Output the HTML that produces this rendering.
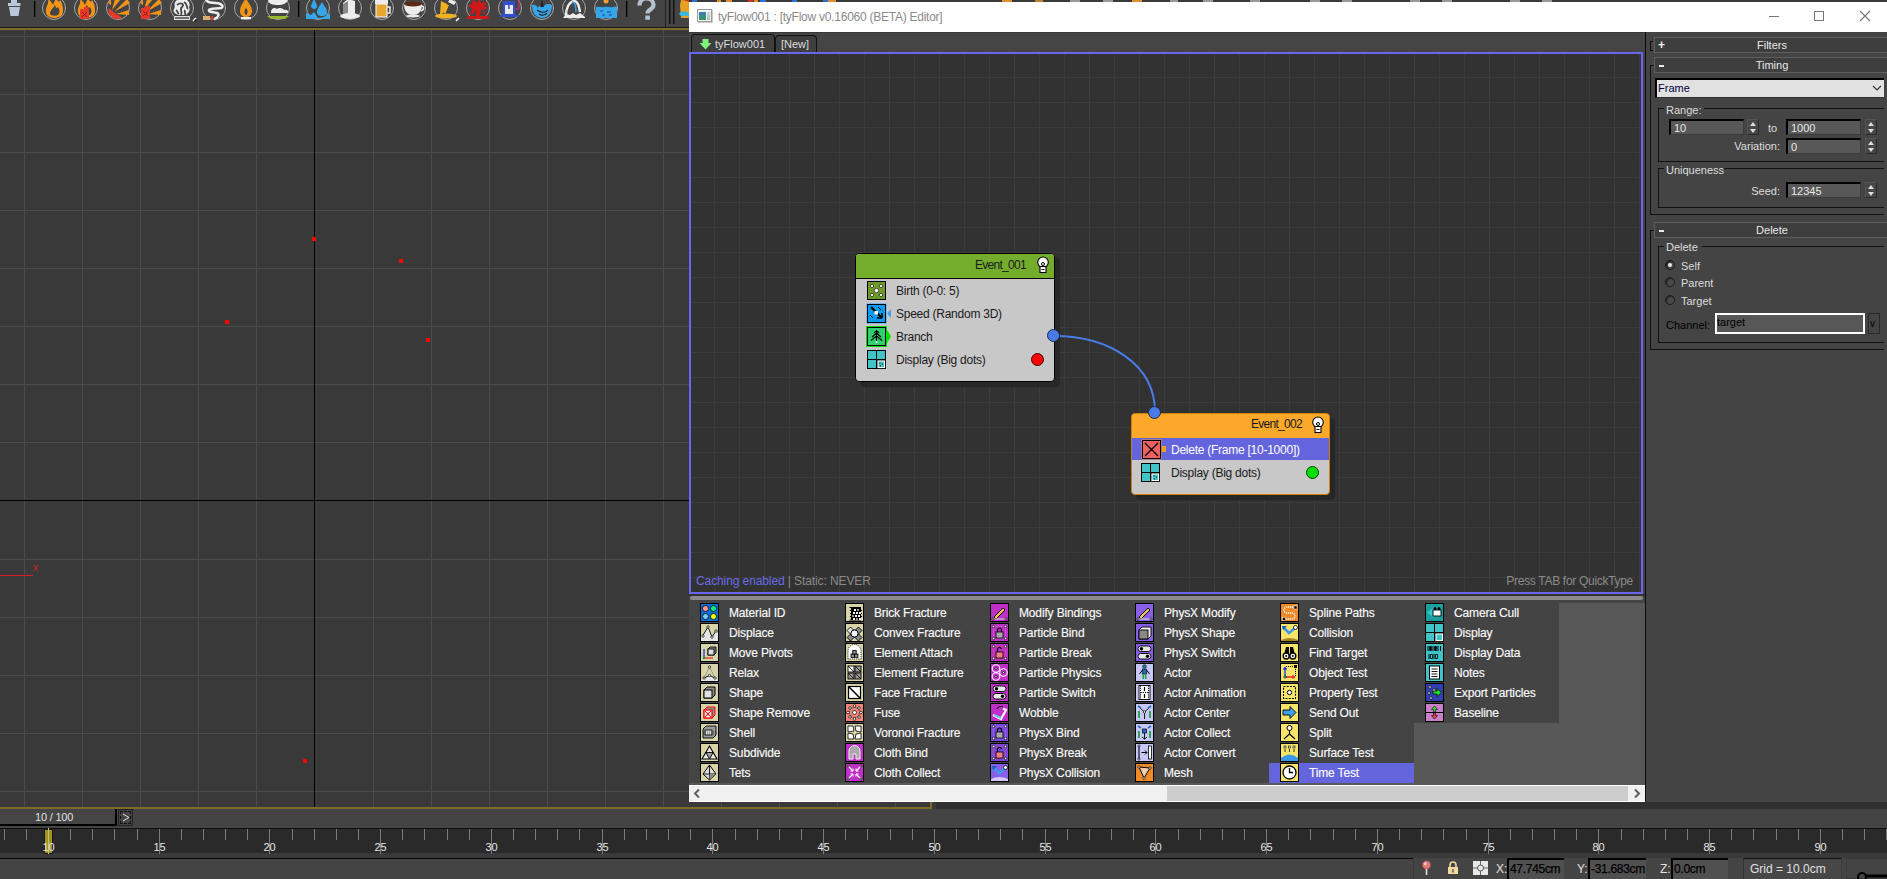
<!DOCTYPE html>
<html><head><meta charset="utf-8">
<style>
*{box-sizing:border-box;margin:0;padding:0}
html,body{width:1887px;height:879px;overflow:hidden;background:#444;font-family:"Liberation Sans",sans-serif;}
.a{position:absolute}
.t{position:absolute;white-space:nowrap;line-height:1}
#vp{left:0;top:28px;width:932px;height:781px;background-color:#393939;border:2px solid #7f6a2a;border-left:none;
 }
.rd{position:absolute;width:4px;height:4px;background:#f00}
#ed{left:689px;top:2px;width:1198px;height:800px;background:#444}
#title{left:0;top:0;width:1198px;height:30px;background:#fff;border-bottom:1px solid #000}
#graph{left:689px;top:52px;width:954px;height:542px;border:2px solid #6666ee;background-color:#323232;
 background-image:linear-gradient(to right,#3c3c3c 1px,transparent 1px),linear-gradient(to bottom,#3c3c3c 1px,transparent 1px);
 background-size:25px 25px;background-position:23px 23px;}
.lt{font-size:12px;color:#fafafa;letter-spacing:-0.15px;-webkit-text-stroke:0.15px #fafafa}
</style></head><body>

<div class="a" style="left:0;top:0;width:666px;height:27px;background:#444;border-right:1px solid #222"></div>
<div class="a" style="left:0;top:27px;width:932px;height:1px;background:#1a1a1a"></div>
<svg class="a" style="left:0;top:0" width="689" height="27"><path d="M11 0H17V3H20.5V6H8V3H11Z" fill="#b8c8d8"/><path d="M9 7H20L18.5 16H10.5Z" fill="#b8c8d8"/><rect x="34" y="1" width="1.3" height="16" fill="#000"/><rect x="298" y="1" width="1.3" height="16" fill="#000"/><rect x="626" y="1" width="1.3" height="16" fill="#000"/><circle cx="54" cy="8" r="11.5" fill="none" stroke="#a8a8a8" stroke-width="1"/><circle cx="86" cy="8" r="11.5" fill="none" stroke="#a8a8a8" stroke-width="1"/><circle cx="118" cy="8" r="11.5" fill="none" stroke="#a8a8a8" stroke-width="1"/><circle cx="150" cy="8" r="11.5" fill="none" stroke="#a8a8a8" stroke-width="1"/><circle cx="182" cy="8" r="11.5" fill="none" stroke="#a8a8a8" stroke-width="1"/><circle cx="214" cy="8" r="11.5" fill="none" stroke="#a8a8a8" stroke-width="1"/><circle cx="246" cy="8" r="11.5" fill="none" stroke="#a8a8a8" stroke-width="1"/><circle cx="278" cy="8" r="11.5" fill="none" stroke="#a8a8a8" stroke-width="1"/><circle cx="318" cy="8" r="11.5" fill="none" stroke="#a8a8a8" stroke-width="1"/><circle cx="350" cy="8" r="11.5" fill="none" stroke="#a8a8a8" stroke-width="1"/><circle cx="382" cy="8" r="11.5" fill="none" stroke="#a8a8a8" stroke-width="1"/><circle cx="414" cy="8" r="11.5" fill="none" stroke="#a8a8a8" stroke-width="1"/><circle cx="446" cy="8" r="11.5" fill="none" stroke="#a8a8a8" stroke-width="1"/><circle cx="478" cy="8" r="11.5" fill="none" stroke="#a8a8a8" stroke-width="1"/><circle cx="510" cy="8" r="11.5" fill="none" stroke="#a8a8a8" stroke-width="1"/><circle cx="542" cy="8" r="11.5" fill="none" stroke="#a8a8a8" stroke-width="1"/><circle cx="574" cy="8" r="11.5" fill="none" stroke="#a8a8a8" stroke-width="1"/><circle cx="606" cy="8" r="11.5" fill="none" stroke="#a8a8a8" stroke-width="1"/><path d="M46 9C47 5 49 3 48 -1C51 1 52 3 53 5C54 2 56 0 55 -2C58 1 59 3 60 0C63 4 63 8 63 11C63 16 59 18 54 18C49 18 45 15 46 9Z" fill="#f29418"/><path d="M50 14C50 10 53 9 55 5C56 8 57 9 58 7C60 10 60 13 58 15C56 16 51 16 50 14Z" fill="#444"/><path d="M78 9C79 5 81 3 80 -1C83 1 84 3 85 5C86 2 88 0 87 -2C90 1 91 3 92 0C95 4 95 8 95 11C95 16 91 18 86 18C81 18 77 15 78 9Z" fill="#f29418"/><path d="M82 14C82 10 85 9 87 5C88 8 89 9 90 7C92 10 92 13 90 15C88 16 83 16 82 14Z" fill="#444"/><rect x="80" y="9" width="9" height="10" rx="1" fill="#e53a2a"/><path d="M82 12L87 17M87 12L82 17" stroke="#a01818" stroke-width="1"/><rect x="84" y="7" width="5" height="2" fill="#e53a2a"/><path d="M112 10L115 -1H121Z M114 12L127 -1L130 3Z M116 14L129 10V15Z M108 3L111 -1V5Z" fill="#f29418"/><path d="M109 8A8.5 8.5 0 0 0 122 17.5L114 12.5Z" fill="#e53a2a"/><path d="M144 10L147 -1H153Z M146 12L159 -1L162 3Z M148 14L161 10V15Z M140 3L143 -1V5Z" fill="#f29418"/><rect x="141" y="8" width="9" height="11" rx="1" fill="#e53a2a"/><rect x="145" y="6" width="5" height="2" fill="#e53a2a"/><path d="M143 11L148 16M148 11L143 16" stroke="#a01818" stroke-width="1"/><circle cx="145.5" cy="13.5" r="1.2" fill="#e53a2a" stroke="#a01818" stroke-width=".8"/><path d="M176 1C173 4 176 6 174 9C172 12 176 14 178 15H186C188 13 191 10 189 7C191 4 188 1 187 0H177Z" fill="#ececec"/><path d="M177 5C181 2 185 4 182 7C179 9 183 11 181 15M184 2C188 4 186 7 188 9M176 10C178 11 177 13 179 14M185 10C184 12 186 13 185 15" stroke="#444" stroke-width="1.8" fill="none"/><rect x="174.5" y="16.5" width="15" height="3" fill="#707070" stroke="#e0e0e0" stroke-width="1"/><path d="M193 21L196 18" stroke="#fff" stroke-width="1.6"/><circle cx="195.5" cy="20.5" r="1" fill="#000"/><path d="M206 0C208 3 212 3 216 3C222 3 224 7 221 8C217 9 210 8 209 10C208 12 214 12 217 13C220 14 218 18 214 19" stroke="#ececec" stroke-width="2.6" fill="none"/><rect x="203" y="16" width="7" height="4" fill="#d8b070"/><rect x="211" y="16" width="2" height="4" fill="#e53a2a"/><path d="M246 -2C243 3 240 6 240 11C240 15 243 17 246 17C249 17 252 15 252 11C252 6 248 3 246 -2Z" fill="#f29418"/><path d="M246 8C244 10 244 14 246 15C248 14 248 10 246 8Z" fill="#444"/><rect x="241" y="17" width="10" height="2.2" fill="#eee"/><path d="M268 0H288C287 3 283 5 278 5C273 5 268 4 268 0Z" fill="#ececec"/><path d="M271 12C271 8 275 7 277 9C279 7 283 8 284 10C286 9 289 11 288 13H271Z" fill="#ececec"/><path d="M267 16H289L285 19H271Z" fill="#98b830"/><path d="M314 -1C312 3 311 5 311 6C311 8 313 9 314 9C316 9 317 8 317 6C317 5 316 3 314 -1Z" fill="#35a6ea"/><path d="M322 2C319 7 317 9 317 12C317 15 319 16 322 16C325 16 327 15 327 12C327 9 325 7 322 2Z" fill="#35a6ea"/><path d="M306 13L311 15L314 12L318 18L324 17L330 13V19H306Z" fill="#35a6ea"/><path d="M343 3L348 -1L355 1V15H343Z" fill="#ececec"/><path d="M343 4L348 1V15H343Z" fill="#8a8a8a"/><ellipse cx="350" cy="16" rx="10" ry="3" fill="#ececec"/><rect x="375" y="-1" width="13" height="5" fill="#ececec"/><rect x="376" y="4" width="11" height="13" fill="#e8a830" stroke="#ececec" stroke-width="1.2"/><path d="M387 7H390V13H387" stroke="#ececec" stroke-width="1.5" fill="none"/><path d="M404 4H422C422 12 418 15 413 15C408 15 404 12 404 4Z" fill="#ececec"/><ellipse cx="413" cy="4" rx="9" ry="2.5" fill="#5a2a14"/><path d="M421 6C424 6 425 9 421 11" stroke="#ececec" stroke-width="1.5" fill="none"/><ellipse cx="413" cy="16" rx="7" ry="1.5" fill="#ececec"/><path d="M450 -1L456 2L454 5L448 2Z" fill="#ececec"/><path d="M441 1L447 4L442 14H446L440 14Z" fill="#f0b020"/><path d="M442 4L447 6L444 13" stroke="#f0b020" stroke-width="3" fill="none"/><ellipse cx="446" cy="16" rx="11" ry="2.5" fill="#f0b020"/><path d="M456 21L459 18" stroke="#fff" stroke-width="1.6"/><path d="M473 -1L477 3L480 -1L481 3L488 2L484 6L489 8L483 10L481 9L480 16H476L476 10L471 13L472 8L467 6L472 4Z" fill="#d01818"/><path d="M475 12L469 14M482 12L487 15" stroke="#d01818" stroke-width="1.4"/><rect x="467" y="16" width="22" height="3" rx="1.5" fill="#d01818"/><rect x="503" y="1" width="12" height="15" fill="#3050d0"/><rect x="505" y="5" width="8" height="9" fill="#e8e8e8"/><path d="M509 5V9" stroke="#3050d0" stroke-width="1.5"/><path d="M513 -1H519V9H515" stroke="#d02890" stroke-width="1" fill="none"/><rect x="500" y="15" width="19" height="2" fill="#3050d0"/><path d="M532 5C534 4 537 5 538 8C539 5 542 4 544 6C546 3 550 4 552 5C552 13 548 18 542 18C536 18 532 13 532 5Z" fill="#35a6ea"/><path d="M537 10C540 13 546 13 548 10M539 14C542 16 546 15 547 13" stroke="#222" stroke-width="1.2" fill="none"/><path d="M542 0L544 7H540Z" fill="#222"/><path d="M566 16C566 8 569 2 574 1C577 1 579 5 580 12" stroke="#ececec" stroke-width="2.5" fill="none"/><path d="M572 2C575 2 576 6 576 12" stroke="#35a6ea" stroke-width="1.5" fill="none"/><path d="M563 18L566 14L570 15L573 13L576 15L580 13L585 17V18Z" fill="#ececec"/><circle cx="606" cy="1" r="2.5" fill="#f0a030"/><path d="M596 7C599 6 601 8 604 7C607 6 610 8 613 7C615 6 616 7 617 7V18H596Z" fill="#35a6ea"/><path d="M600 11H603M607 12H611M602 15H605M609 15H612" stroke="#1a4a8a" stroke-width="1.2"/><path d="M639.5 5.5C639.5 1 642.5 -1.5 646 -1.5C650 -1.5 653.5 1 653.5 5C653.5 9.5 647.5 9.5 647.5 13.5" stroke="#b4c0cc" stroke-width="4.2" fill="none"/><rect x="645.3" y="15.5" width="4.6" height="4.3" fill="#b4c0cc"/><rect x="665" y="0" width="1" height="27" fill="#222"/><rect x="669" y="0" width="1.5" height="24" fill="#111"/><rect x="673" y="0" width="1.5" height="24" fill="#111"/><path d="M681 0H689V18H681L680 5Z" fill="#e8a020"/><path d="M683 0L689 2V0Z" fill="#d03020"/><path d="M679 14C681 11 685 11 689 13V17C686 15 683 15 682 17Z" fill="#30b8e8"/></svg>
<div id="vp" class="a"></div>
<div class="a" style="left:24px;top:30px;width:1px;height:777px;background:#4c4c4c"></div><div class="a" style="left:82px;top:30px;width:1px;height:777px;background:#4c4c4c"></div><div class="a" style="left:140px;top:30px;width:1px;height:777px;background:#4c4c4c"></div><div class="a" style="left:198px;top:30px;width:1px;height:777px;background:#4c4c4c"></div><div class="a" style="left:256px;top:30px;width:1px;height:777px;background:#4c4c4c"></div><div class="a" style="left:373px;top:30px;width:1px;height:777px;background:#4c4c4c"></div><div class="a" style="left:431px;top:30px;width:1px;height:777px;background:#4c4c4c"></div><div class="a" style="left:489px;top:30px;width:1px;height:777px;background:#4c4c4c"></div><div class="a" style="left:547px;top:30px;width:1px;height:777px;background:#4c4c4c"></div><div class="a" style="left:605px;top:30px;width:1px;height:777px;background:#4c4c4c"></div><div class="a" style="left:663px;top:30px;width:1px;height:777px;background:#4c4c4c"></div><div class="a" style="left:721px;top:30px;width:1px;height:777px;background:#4c4c4c"></div><div class="a" style="left:779px;top:30px;width:1px;height:777px;background:#4c4c4c"></div><div class="a" style="left:837px;top:30px;width:1px;height:777px;background:#4c4c4c"></div><div class="a" style="left:895px;top:30px;width:1px;height:777px;background:#4c4c4c"></div><div class="a" style="left:0;top:36px;width:930px;height:1px;background:#4c4c4c"></div><div class="a" style="left:0;top:94px;width:930px;height:1px;background:#4c4c4c"></div><div class="a" style="left:0;top:152px;width:930px;height:1px;background:#4c4c4c"></div><div class="a" style="left:0;top:210px;width:930px;height:1px;background:#4c4c4c"></div><div class="a" style="left:0;top:268px;width:930px;height:1px;background:#4c4c4c"></div><div class="a" style="left:0;top:326px;width:930px;height:1px;background:#4c4c4c"></div><div class="a" style="left:0;top:384px;width:930px;height:1px;background:#4c4c4c"></div><div class="a" style="left:0;top:442px;width:930px;height:1px;background:#4c4c4c"></div><div class="a" style="left:0;top:559px;width:930px;height:1px;background:#4c4c4c"></div><div class="a" style="left:0;top:617px;width:930px;height:1px;background:#4c4c4c"></div><div class="a" style="left:0;top:675px;width:930px;height:1px;background:#4c4c4c"></div><div class="a" style="left:0;top:733px;width:930px;height:1px;background:#4c4c4c"></div><div class="a" style="left:0;top:791px;width:930px;height:1px;background:#4c4c4c"></div>
<div class="a" style="left:314px;top:30px;width:1px;height:777px;background:#000"></div>
<div class="a" style="left:0;top:500px;width:930px;height:1px;background:#000"></div>
<div class="rd" style="left:312px;top:237px"></div>
<div class="rd" style="left:399px;top:259px"></div>
<div class="rd" style="left:225px;top:320px"></div>
<div class="rd" style="left:426px;top:338px"></div>
<div class="rd" style="left:303px;top:759px"></div>
<div class="a" style="left:0;top:575px;width:33px;height:1px;background:#d02020"></div>
<div class="t" style="left:33px;top:563px;font-size:10px;color:#d02020">x</div>
<div class="a" id="ed"></div>
<div class="a" style="left:689px;top:0;width:1198px;height:2px;background:#3a3a3a"></div><div class="a" style="left:692px;top:0;width:5px;height:2px;background:#2a70d0"></div><div class="a" style="left:717px;top:0;width:4px;height:2px;background:#e09030"></div><div class="a" style="left:726px;top:0;width:6px;height:2px;background:#e09030"></div><div class="a" style="left:748px;top:0;width:5px;height:2px;background:#d03030"></div><div class="a" style="left:754px;top:0;width:4px;height:2px;background:#e09030"></div><div class="a" style="left:760px;top:0;width:6px;height:2px;background:#2a70d0"></div><div class="a" style="left:792px;top:0;width:5px;height:2px;background:#2a70d0"></div><div class="a" style="left:823px;top:0;width:5px;height:2px;background:#2a70d0"></div><div class="a" style="left:828px;top:0;width:8px;height:2px;background:#e09030"></div><div class="a" style="left:1002px;top:0;width:10px;height:2px;background:#e09030"></div><div class="a" style="left:1035px;top:0;width:8px;height:2px;background:#c08030"></div><div class="a" style="left:1070px;top:0;width:10px;height:2px;background:#999"></div><div class="a" style="left:1103px;top:0;width:10px;height:2px;background:#999"></div><div class="a" style="left:1132px;top:0;width:10px;height:2px;background:#e09030"></div><div class="a" style="left:1170px;top:0;width:8px;height:2px;background:#999"></div><div class="a" style="left:1203px;top:0;width:10px;height:2px;background:#999"></div><div class="a" style="left:1250px;top:0;width:10px;height:2px;background:#999"></div><div class="a" style="left:1310px;top:0;width:10px;height:2px;background:#999"></div><div class="a" style="left:1342px;top:0;width:10px;height:2px;background:#999"></div><div class="a" style="left:1410px;top:0;width:10px;height:2px;background:#999"></div><div class="a" style="left:1442px;top:0;width:10px;height:2px;background:#999"></div><div class="a" style="left:1510px;top:0;width:10px;height:2px;background:#999"></div><div class="a" style="left:1542px;top:0;width:10px;height:2px;background:#999"></div>
<div class="a" style="left:689px;top:2px;width:1198px;height:30px;background:#fff"></div>
<div class="a" style="left:689px;top:32px;width:1198px;height:1px;background:#383838"></div>
<!-- title icon -->
<div class="a" style="left:697px;top:9px;width:15px;height:13px;border:1px solid #9a9a9a;background:#f4f4f4;box-shadow:1px 1px 0 #ccc"></div>
<div class="a" style="left:699px;top:12px;width:7px;height:8px;background:linear-gradient(#3b78b8,#3a9a5a)"></div>
<div class="a" style="left:707px;top:12px;width:3px;height:8px;background:linear-gradient(#d0d8e0,#a8c8a0)"></div>
<div class="t" style="left:718px;top:11px;font-size:12px;color:#8a8a8a;letter-spacing:-0.25px">tyFlow001 : [tyFlow v0.16060 (BETA) Editor]</div>
<!-- window buttons -->
<div class="a" style="left:1769px;top:16px;width:10px;height:1px;background:#777"></div>
<div class="a" style="left:1814px;top:11px;width:10px;height:10px;border:1px solid #777"></div>
<svg class="a" style="left:1859px;top:10px" width="12" height="12"><path d="M1 1L11 11M11 1L1 11" stroke="#777" stroke-width="1.1"/></svg>
<!-- tab bar -->
<div class="a" style="left:689px;top:33px;width:956px;height:19px;background:#454545"></div>
<div class="a" style="left:691px;top:34px;width:84px;height:19px;border:1px solid #111;border-bottom:none;border-radius:4px 4px 0 0;background:#3e3e3e"></div>
<div class="a" style="left:775px;top:35px;width:42px;height:18px;border:1px solid #111;border-bottom:none;border-radius:4px 4px 0 0;background:#3e3e3e"></div>
<svg class="a" style="left:699px;top:39px" width="13" height="11"><path d="M3.5 0H9.5V4H12.5L6.5 10.5L0.5 4H3.5Z" fill="#7ef07e"/></svg>
<div class="t" style="left:715px;top:39px;font-size:11px;color:#dcdcdc">tyFlow001</div>
<div class="t" style="left:781px;top:39px;font-size:11px;color:#dcdcdc">[New]</div>

<div class="a" id="graph"></div>
<style>
.nd{position:absolute;border:1px solid #000;border-radius:4px;background:#c8c8c8;box-shadow:5px 5px 0 #272727}
.nh{position:absolute;left:0;top:0;right:0;height:25px;border-bottom:1px solid #000;border-radius:3px 3px 0 0}
.nt{position:absolute;font-size:12px;color:#1a1a1a;line-height:1;white-space:nowrap;letter-spacing:-0.25px}
.port{position:absolute;width:13px;height:13px;border-radius:50%;background:#4a7ce8;border:1px solid #1c2a50}
</style>
<!-- wire -->
<svg class="a" style="left:1040px;top:320px" width="140" height="110"><path d="M14 16C70 16 115 45 115 92" stroke="#4a7ce8" stroke-width="2" fill="none"/></svg>
<!-- Event_001 -->
<div class="nd" style="left:855px;top:253px;width:200px;height:129px">
 <div class="nh" style="background:#74ad2c"></div>
</div>
<div class="nt" style="left:900px;width:126px;text-align:right;top:259px;letter-spacing:-0.7px">Event_001</div>
<svg class="a" style="left:1036px;top:256px" width="14" height="18"><circle cx="7" cy="6.3" r="5.3" fill="#fff" stroke="#000" stroke-width="1.1"/><rect x="4" y="10.5" width="6" height="6" fill="#fff" stroke="#000" stroke-width="1.1"/><circle cx="7" cy="8" r="1.5" fill="#fff" stroke="#000" stroke-width="1"/><path d="M5.5 13.5H8.5" stroke="#000" stroke-width="1"/></svg>
<!-- Birth icon -->
<svg class="a" style="left:867px;top:281px" width="19" height="19"><rect x="0.5" y="0.5" width="18" height="18" fill="#6e9a2a" stroke="#000"/><circle cx="5" cy="5" r="1.6" fill="#fff" stroke="#000" stroke-width=".6"/><circle cx="14" cy="5" r="1.6" fill="#fff" stroke="#000" stroke-width=".6"/><circle cx="5" cy="14" r="1.6" fill="#fff" stroke="#000" stroke-width=".6"/><circle cx="14" cy="14" r="1.6" fill="#fff" stroke="#000" stroke-width=".6"/><circle cx="9.5" cy="9.5" r="2.2" fill="#fff" stroke="#000" stroke-width=".6"/></svg>
<div class="nt" style="left:896px;top:285px">Birth (0-0: 5)</div>
<!-- Speed icon -->
<svg class="a" style="left:866px;top:303px" width="26" height="21"><rect x="0.5" y="0.5" width="20" height="20" fill="#3aa8ff"/><rect x="1.5" y="1.5" width="18" height="18" fill="#0a9af0" stroke="#000"/><path d="M5 4L16 15" stroke="#000" stroke-width="2.2"/><path d="M16 15L11 15M16 15L16 10" stroke="#000" stroke-width="1.6"/><path d="M12 4L15 7M4 12L7 15" stroke="#000" stroke-width="1"/><rect x="8.5" y="8" width="3.5" height="3.5" fill="#fff"/><path d="M21 10.5L25 6V15Z" fill="#4aa0e8"/></svg>
<div class="nt" style="left:896px;top:308px">Speed (Random 3D)</div>
<!-- Branch icon -->
<svg class="a" style="left:866px;top:326px" width="26" height="21"><rect x="0" y="0" width="21" height="21" fill="#00e000"/><rect x="1.5" y="1.5" width="18" height="18" fill="#30d070" stroke="#000"/><path d="M10.5 4V16M10.5 7L6 11M10.5 7L15 11M10.5 10L5 14.5M10.5 10L16 14.5M10.5 4.5L8 7M10.5 4.5L13 7" stroke="#000" stroke-width="1.1" fill="none"/><circle cx="10.5" cy="16" r="1" fill="#fff"/><path d="M21 4L25 10.5L21 17Z" fill="#00e000"/></svg>
<div class="nt" style="left:896px;top:331px">Branch</div>
<!-- Display icon -->
<svg class="a" style="left:867px;top:350px" width="19" height="19"><rect x="0.5" y="0.5" width="18" height="18" fill="#40c4c8" stroke="#000"/><path d="M9.5 0V19M0 9.5H19" stroke="#000" stroke-width="1"/><rect x="10" y="10" width="8.5" height="8.5" fill="#fff" stroke="#000" stroke-width=".8"/><rect x="11.5" y="11.5" width="5.5" height="5.5" fill="#40c4c8"/><circle cx="13" cy="13" r=".6" fill="#000"/><circle cx="15.5" cy="14" r=".6" fill="#000"/><circle cx="13.5" cy="15.8" r=".6" fill="#000"/></svg>
<div class="nt" style="left:896px;top:354px">Display (Big dots)</div>
<div class="a" style="left:1031px;top:353px;width:13px;height:13px;border-radius:50%;background:#f00;border:1px solid #400"></div>
<div class="port" style="left:1047px;top:329px"></div>

<!-- Event_002 -->
<div class="nd" style="left:1131px;top:413px;width:199px;height:82px;border-color:#d08000">
 <div class="nh" style="background:#fca82a;border-bottom-color:#d08000"></div>
</div>
<div class="a" style="left:1132px;top:438px;width:197px;height:22px;background:#6464dc"></div>
<div class="nt" style="left:1176px;width:126px;text-align:right;top:418px;letter-spacing:-0.7px">Event_002</div>
<svg class="a" style="left:1311px;top:416px" width="14" height="18"><circle cx="7" cy="6.3" r="5.3" fill="#fff" stroke="#000" stroke-width="1.1"/><rect x="4" y="10.5" width="6" height="6" fill="#fff" stroke="#000" stroke-width="1.1"/><circle cx="7" cy="8" r="1.5" fill="#fff" stroke="#000" stroke-width="1"/><path d="M5.5 13.5H8.5" stroke="#000" stroke-width="1"/></svg>
<svg class="a" style="left:1141px;top:439px" width="27" height="21"><rect x="0.5" y="0.5" width="20" height="20" fill="#f09030"/><rect x="1.5" y="1.5" width="18" height="18" fill="#f06060" stroke="#000"/><path d="M4 4L17 17M17 4L4 17" stroke="#000" stroke-width="1.4"/><rect x="21" y="7" width="4" height="6" fill="#f0a020"/></svg>
<div class="nt" style="left:1171px;top:444px;color:#fff">Delete (Frame [10-1000])</div>
<svg class="a" style="left:1141px;top:463px" width="19" height="19"><rect x="0.5" y="0.5" width="18" height="18" fill="#40c4c8" stroke="#000"/><path d="M9.5 0V19M0 9.5H19" stroke="#000" stroke-width="1"/><rect x="10" y="10" width="8.5" height="8.5" fill="#fff" stroke="#000" stroke-width=".8"/><rect x="11.5" y="11.5" width="5.5" height="5.5" fill="#40c4c8"/><circle cx="13" cy="13" r=".6" fill="#000"/><circle cx="15.5" cy="14" r=".6" fill="#000"/><circle cx="13.5" cy="15.8" r=".6" fill="#000"/></svg>
<div class="nt" style="left:1171px;top:467px">Display (Big dots)</div>
<div class="a" style="left:1306px;top:466px;width:13px;height:13px;border-radius:50%;background:#00e000;border:1px solid #040"></div>
<div class="port" style="left:1148px;top:406px"></div>

<div class="t" style="left:696px;top:575px;font-size:12px;color:#6a6ae8;letter-spacing:-0.1px">Caching enabled <span style="color:#8a8a8a">| Static: NEVER</span></div>
<div class="t" style="left:1400px;top:575px;width:233px;text-align:right;font-size:12px;color:#8a8a8a;letter-spacing:-0.3px">Press TAB for QuickType</div>

<style>
.hdr{position:absolute;left:1654px;width:233px;height:16px;border:1px solid #5e5e5e;border-right:none;background:#3e3e3e}
.hdr .c{position:absolute;left:2px;right:0;top:2px;text-align:center;font-size:11px;color:#e8e8e8;line-height:1}
.hdr .s{position:absolute;left:3px;top:1px;font-size:12px;color:#eee;font-weight:bold;line-height:1}
.fld{position:absolute;height:16px;background:#585858;border-top:2px solid #000;border-left:2px solid #000;border-right:1px solid #3c3c3c;border-bottom:1px solid #3c3c3c}
.fld span{position:absolute;left:3px;top:2px;font-size:11px;color:#e8e8e8;line-height:1}
.spn{position:absolute;width:12px;height:16px;background:#474747;border:1px solid #2a2a2a;border-top-color:#555;border-left-color:#555}
.spn:before{content:"";position:absolute;left:2px;top:2px;border-left:3.5px solid transparent;border-right:3.5px solid transparent;border-bottom:4px solid #ddd}
.spn:after{content:"";position:absolute;left:2px;top:9px;border-left:3.5px solid transparent;border-right:3.5px solid transparent;border-top:4px solid #ddd}
.lbl{position:absolute;font-size:11px;color:#ddd;line-height:1;white-space:nowrap}
.gb{position:absolute;border:1px solid #111;border-right:none}
.rad{position:absolute;width:10px;height:10px;border-radius:50%;background:#4a4a4a;border:1px solid #1a1a1a;box-shadow:inset 1px 1px 1px #222}
</style>
<div class="a" style="left:1645px;top:32px;width:1px;height:770px;background:#0a0a0a"></div>
<div class="a" style="left:1646px;top:32px;width:241px;height:770px;background:#444"></div>
<div class="a" style="left:1646px;top:802px;width:241px;height:1px;background:#555"></div>
<!-- Filters -->
<div class="a" style="left:1650px;top:41px;width:3px;height:10px;border:1px solid #111;border-right:none"></div>
<div class="hdr" style="top:37px"><div class="s">+</div><div class="c">Filters</div></div>
<!-- Timing -->
<div class="a" style="left:1650px;top:65px;width:4px;height:150px;border-left:1px solid #111;border-top:1px solid #111;border-bottom:1px solid #111"></div>
<div class="a" style="left:1650px;top:214px;width:234px;height:1px;background:#111"></div>
<div class="hdr" style="top:57px"><div class="a" style="left:4px;top:7px;width:5px;height:2px;background:#e8e8e8"></div><div class="c">Timing</div></div>
<div class="a" style="left:1655px;top:78px;width:229px;height:20px;background:#e1e1e1;border-top:2px solid #000;border-left:2px solid #000;border-bottom:1px solid #333"></div>
<div class="t" style="left:1658px;top:83px;font-size:11px;color:#000040">Frame</div>
<svg class="a" style="left:1872px;top:85px" width="10" height="7"><path d="M1 1L5 5L9 1" stroke="#333" stroke-width="1.2" fill="none"/></svg>
<!-- Range group -->
<div class="gb" style="left:1658px;top:108px;width:226px;height:54px"></div>
<div class="a" style="left:1664px;top:105px;width:40px;height:6px;background:#444"></div>
<div class="lbl" style="left:1666px;top:105px">Range:</div>
<div class="fld" style="left:1669px;top:119px;width:75px"><span>10</span></div>
<div class="spn" style="left:1747px;top:119px"></div>
<div class="lbl" style="left:1768px;top:123px">to</div>
<div class="fld" style="left:1786px;top:119px;width:75px"><span>1000</span></div>
<div class="spn" style="left:1865px;top:119px"></div>
<div class="lbl" style="left:1734px;top:141px;width:46px;text-align:right">Variation:</div>
<div class="fld" style="left:1786px;top:138px;width:75px"><span>0</span></div>
<div class="spn" style="left:1865px;top:138px"></div>
<!-- Uniqueness -->
<div class="gb" style="left:1658px;top:168px;width:226px;height:40px"></div>
<div class="a" style="left:1664px;top:164px;width:60px;height:6px;background:#444"></div>
<div class="lbl" style="left:1666px;top:165px">Uniqueness</div>
<div class="lbl" style="left:1740px;top:186px;width:40px;text-align:right">Seed:</div>
<div class="fld" style="left:1786px;top:182px;width:75px"><span>12345</span></div>
<div class="spn" style="left:1865px;top:182px"></div>
<!-- Delete -->
<div class="a" style="left:1650px;top:230px;width:4px;height:120px;border-left:1px solid #111;border-top:1px solid #111;border-bottom:1px solid #111"></div>
<div class="a" style="left:1650px;top:349px;width:234px;height:1px;background:#111"></div>
<div class="hdr" style="top:222px"><div class="a" style="left:4px;top:7px;width:5px;height:2px;background:#e8e8e8"></div><div class="c">Delete</div></div>
<div class="gb" style="left:1658px;top:246px;width:226px;height:97px"></div>
<div class="a" style="left:1664px;top:243px;width:38px;height:6px;background:#444"></div>
<div class="lbl" style="left:1666px;top:242px">Delete</div>
<div class="rad" style="left:1665px;top:260px"></div>
<div class="a" style="left:1668px;top:263px;width:4px;height:4px;border-radius:50%;background:#e8e8e8"></div>
<div class="rad" style="left:1665px;top:277px"></div>
<div class="rad" style="left:1665px;top:295px"></div>
<div class="lbl" style="left:1681px;top:261px">Self</div>
<div class="lbl" style="left:1681px;top:278px">Parent</div>
<div class="lbl" style="left:1681px;top:296px">Target</div>
<div class="lbl" style="left:1666px;top:320px;color:#000">Channel:</div>
<div class="a" style="left:1715px;top:313px;width:150px;height:21px;border:2px solid #fff;background:#575757"></div>
<div class="lbl" style="left:1717px;top:317px;color:#000">target</div>
<div class="a" style="left:1868px;top:313px;width:12px;height:21px;border:1px solid #2a2a2a;background:#444"></div>
<div class="lbl" style="left:1870px;top:319px;color:#000;font-size:10px">v</div>

<div class="a" style="left:689px;top:594px;width:956px;height:191px;background:#585858"></div>
<div class="a" style="left:689px;top:594px;width:956px;height:9px;background:#444"></div>
<div class="a" style="left:689px;top:594px;width:956px;height:2px;background:#333"></div>
<div class="a" style="left:690px;top:596px;width:953px;height:4px;border-radius:2px;background:#8a8a8a"></div>
<div class="a" style="left:689px;top:603px;width:725px;height:180px;background:#444"></div>
<div class="a" style="left:1414px;top:603px;width:145px;height:120px;background:#444"></div>
<div class="a" style="left:1269px;top:763px;width:145px;height:20px;background:#6464dc"></div>
<svg class="a" style="left:700px;top:603px" width="19" height="19"><rect x="0.5" y="0.5" width="18" height="18" fill="#0a6ed8" stroke="#000"/><circle cx="5.5" cy="5.5" r="3" fill="#ff9898" stroke="#000" stroke-width=".8"/><circle cx="13.5" cy="5.5" r="3" fill="#00f090" stroke="#000" stroke-width=".8"/><circle cx="5.5" cy="13.5" r="3" fill="#70d0ff" stroke="#000" stroke-width=".8"/><circle cx="13.5" cy="13.5" r="3" fill="#ffff00" stroke="#000" stroke-width=".8"/></svg>
<div class="t lt" style="left:729px;top:607px">Material ID</div>
<svg class="a" style="left:700px;top:623px" width="19" height="19"><rect x="0.5" y="0.5" width="18" height="18" fill="#d8d4a8" stroke="#000"/><path d="M1 18V13L3 13L8 4L12 14L16 8L18 11V18Z" fill="#e6e6e6"/><path d="M2.5 13L8 4L12 14L16 8" fill="none" stroke="#000" stroke-width=".9"/><circle cx="3" cy="13" r="1.2" fill="#fff" stroke="#000" stroke-width=".7"/><circle cx="8" cy="4" r="1.2" fill="#fff" stroke="#000" stroke-width=".7"/><circle cx="12" cy="14" r="1.2" fill="#fff" stroke="#000" stroke-width=".7"/><circle cx="16" cy="8" r="1.2" fill="#fff" stroke="#000" stroke-width=".7"/></svg>
<div class="t lt" style="left:729px;top:627px">Displace</div>
<svg class="a" style="left:700px;top:643px" width="19" height="19"><rect x="0.5" y="0.5" width="18" height="18" fill="#d8d4a8" stroke="#000"/><path d="M8 6L10 4H16V10L14 12H8Z" fill="#888" stroke="#000" stroke-width=".9"/><rect x="8" y="6" width="6" height="6" fill="#ddd" stroke="#000" stroke-width=".9"/><path d="M4 15V6" stroke="#1030f0" stroke-width="1.2"/><path d="M4 15H13" stroke="#f02020" stroke-width="1.2"/><circle cx="4" cy="15" r="1.2" fill="#10a030"/></svg>
<div class="t lt" style="left:729px;top:647px">Move Pivots</div>
<svg class="a" style="left:700px;top:663px" width="19" height="19"><rect x="0.5" y="0.5" width="18" height="18" fill="#d8d4a8" stroke="#000"/><path d="M1 18L4 15L9.5 12.5L15 15L18 18Z" fill="#e6e6e6"/><path d="M9.5 4L4 15M9.5 4L15 15" stroke="#888" stroke-width=".8"/><path d="M4 15L9.5 12.5L15 15" stroke="#000" stroke-width=".9" fill="none"/><circle cx="9.5" cy="4" r="1.2" fill="#fff" stroke="#000" stroke-width=".7"/><circle cx="4" cy="15" r="1.2" fill="#fff" stroke="#000" stroke-width=".7"/><circle cx="9.5" cy="12.5" r="1.2" fill="#fff" stroke="#000" stroke-width=".7"/><circle cx="15" cy="15" r="1.2" fill="#fff" stroke="#000" stroke-width=".7"/></svg>
<div class="t lt" style="left:729px;top:667px">Relax</div>
<svg class="a" style="left:700px;top:683px" width="19" height="19"><rect x="0.5" y="0.5" width="18" height="18" fill="#d8d4a8" stroke="#000"/><path d="M4 7L7 4H15V12L12 15H4Z" fill="#8a8a8a" stroke="#000" stroke-width="1"/><rect x="4" y="7" width="8" height="8" fill="#e0e0e0" stroke="#000" stroke-width="1"/></svg>
<div class="t lt" style="left:729px;top:687px">Shape</div>
<svg class="a" style="left:700px;top:703px" width="19" height="19"><rect x="0.5" y="0.5" width="18" height="18" fill="#d8d4a8" stroke="#000"/><path d="M4 7L7 4H15V12L12 15H4Z" fill="#8a8a8a" stroke="#f00" stroke-width="1"/><rect x="4" y="7" width="8" height="8" fill="#e0e0e0" stroke="#f00" stroke-width="1.2"/><path d="M5 8L11 14M11 8L5 14" stroke="#f00" stroke-width="1"/></svg>
<div class="t lt" style="left:729px;top:707px">Shape Remove</div>
<svg class="a" style="left:700px;top:723px" width="19" height="19"><rect x="0.5" y="0.5" width="18" height="18" fill="#d8d4a8" stroke="#000"/><path d="M3 6L6 3H16V12L13 15H3Z" fill="#999" stroke="#000" stroke-width=".9"/><rect x="5" y="7" width="7" height="5" fill="#ddd" stroke="#000" stroke-width=".8"/><path d="M3 9H16M3 11H16" stroke="#000" stroke-dasharray="1 1" stroke-width=".6"/></svg>
<div class="t lt" style="left:729px;top:727px">Shell</div>
<svg class="a" style="left:700px;top:743px" width="19" height="19"><rect x="0.5" y="0.5" width="18" height="18" fill="#d8d4a8" stroke="#000"/><path d="M9.5 3L17 16H2Z" fill="#e8e8e8" stroke="#000" stroke-width="1.1"/><path d="M5.8 9.5H13.2L9.5 16Z" fill="#999" stroke="#000" stroke-width=".9"/></svg>
<div class="t lt" style="left:729px;top:747px">Subdivide</div>
<svg class="a" style="left:700px;top:763px" width="19" height="19"><rect x="0.5" y="0.5" width="18" height="18" fill="#d8d4a8" stroke="#000"/><path d="M9.5 2L16 11L9.5 17L3 11Z" fill="#ddd" stroke="#000" stroke-width="1"/><path d="M9.5 2V17M3 11H16" stroke="#000" stroke-width=".9"/><path d="M9.5 11L16 11L9.5 17Z" fill="#888"/></svg>
<div class="t lt" style="left:729px;top:767px">Tets</div>
<svg class="a" style="left:845px;top:603px" width="19" height="19"><rect x="0.5" y="0.5" width="18" height="18" fill="#d8d4a8" stroke="#000"/><path d="M4.5 4.5H16M4.5 17H16" stroke="#000" stroke-width="1"/><rect x="6" y="5" width="10" height="12" fill="#000"/><path d="M5 7.5H17M5 10.5H17M5 13.5H17" stroke="#000" stroke-width="1"/><rect x="9" y="6" width="2" height="2" fill="#fff"/><rect x="12" y="6" width="2" height="2" fill="#999"/><rect x="8" y="9" width="2" height="2" fill="#fff"/><rect x="11" y="9" width="2" height="2" fill="#fff"/><rect x="14" y="9" width="2" height="2" fill="#fff"/><rect x="7" y="12" width="2" height="2" fill="#999"/><rect x="10" y="12" width="2" height="2" fill="#fff"/><rect x="13" y="12" width="2" height="2" fill="#fff"/><rect x="8" y="15" width="2" height="2" fill="#fff"/><rect x="11" y="15" width="2" height="2" fill="#999"/><rect x="14" y="15" width="2" height="2" fill="#fff"/></svg>
<div class="t lt" style="left:874px;top:607px">Brick Fracture</div>
<svg class="a" style="left:845px;top:623px" width="19" height="19"><rect x="0.5" y="0.5" width="18" height="18" fill="#d8d4a8" stroke="#000"/><path d="M2 7.5L5.5 4L9 7.5L5.5 11Z" fill="#e8e8e8" stroke="#000" stroke-width=".9"/><path d="M10 7.5L13.5 4L17 7.5L13.5 11Z M2 14.5L5.5 11L9 14.5L5.5 18Z M10 14.5L13.5 11L17 14.5L13.5 18Z" fill="#888" stroke="#000" stroke-width=".9"/><circle cx="9.5" cy="10.5" r="3.6" fill="#eef4ff" stroke="#000" stroke-width="1"/></svg>
<div class="t lt" style="left:874px;top:627px">Convex Fracture</div>
<svg class="a" style="left:845px;top:643px" width="19" height="19"><rect x="0.5" y="0.5" width="18" height="18" fill="#d8d4a8" stroke="#000"/><path d="M3 16V8A6.5 6.5 0 0 1 16 8V16Z" fill="#fff" stroke="#000" stroke-dasharray="1.2 1" stroke-width=".8"/><rect x="6" y="11" width="3.5" height="3.5" fill="#888" stroke="#000" stroke-width=".8"/><rect x="9.5" y="11" width="3.5" height="3.5" fill="#888" stroke="#000" stroke-width=".8"/><rect x="7.7" y="7.5" width="3.5" height="3.5" fill="#888" stroke="#000" stroke-width=".8"/></svg>
<div class="t lt" style="left:874px;top:647px">Element Attach</div>
<svg class="a" style="left:845px;top:663px" width="19" height="19"><rect x="0.5" y="0.5" width="18" height="18" fill="#d8d4a8" stroke="#000"/><rect x="3" y="3" width="6" height="6" fill="#fff" stroke="#000" stroke-width=".9"/><rect x="10" y="3" width="6" height="6" fill="#999" stroke="#000" stroke-width=".9"/><rect x="3" y="10" width="6" height="6" fill="#999" stroke="#000" stroke-width=".9"/><rect x="10" y="10" width="6" height="6" fill="#999" stroke="#000" stroke-width=".9"/><path d="M3 3L9 9M10 3L16 9M3 10L9 16M10 10L16 16" stroke="#000" stroke-width=".8"/></svg>
<div class="t lt" style="left:874px;top:667px">Element Fracture</div>
<svg class="a" style="left:845px;top:683px" width="19" height="19"><rect x="0.5" y="0.5" width="18" height="18" fill="#d8d4a8" stroke="#000"/><rect x="3.5" y="3.5" width="12" height="12" fill="#fff" stroke="#000" stroke-width="1.2"/><path d="M3.5 3.5L15.5 15.5" stroke="#000" stroke-width="1.6"/></svg>
<div class="t lt" style="left:874px;top:687px">Face Fracture</div>
<svg class="a" style="left:845px;top:703px" width="19" height="19"><rect x="0.5" y="0.5" width="18" height="18" fill="#f08878" stroke="#000"/><circle cx="9.5" cy="9.5" r="5" fill="none" stroke="#000" stroke-dasharray="1 1" stroke-width=".8"/><circle cx="9.5" cy="3" r="1.3" fill="#fff" stroke="#000" stroke-width=".7"/><circle cx="9.5" cy="16" r="1.3" fill="#fff" stroke="#000" stroke-width=".7"/><circle cx="3" cy="9.5" r="1.3" fill="#fff" stroke="#000" stroke-width=".7"/><circle cx="16" cy="9.5" r="1.3" fill="#fff" stroke="#000" stroke-width=".7"/><circle cx="5" cy="5" r="1.3" fill="#fff" stroke="#000" stroke-width=".7"/><circle cx="14" cy="5" r="1.3" fill="#fff" stroke="#000" stroke-width=".7"/><circle cx="5" cy="14" r="1.3" fill="#fff" stroke="#000" stroke-width=".7"/><circle cx="14" cy="14" r="1.3" fill="#fff" stroke="#000" stroke-width=".7"/><circle cx="9.5" cy="9.5" r="2" fill="#fff" stroke="#000" stroke-width=".7"/></svg>
<div class="t lt" style="left:874px;top:707px">Fuse</div>
<svg class="a" style="left:845px;top:723px" width="19" height="19"><rect x="0.5" y="0.5" width="18" height="18" fill="#d8d4a8" stroke="#000"/><path d="M3 3H8L9 8L3 9Z M10 3H16V9L11 8Z M3 10L8 11L9 16H3Z M11 11L16 10V16H10Z" fill="#fff" stroke="#000" stroke-width=".8"/></svg>
<div class="t lt" style="left:874px;top:727px">Voronoi Fracture</div>
<svg class="a" style="left:845px;top:743px" width="19" height="19"><rect x="0.5" y="0.5" width="18" height="18" fill="#c030c8" stroke="#000"/><path d="M4 16V8A5 5 0 0 1 15 8V16H11V11H8V16Z" fill="#aaa" stroke="#eee" stroke-width="1"/></svg>
<div class="t lt" style="left:874px;top:747px">Cloth Bind</div>
<svg class="a" style="left:845px;top:763px" width="19" height="19"><rect x="0.5" y="0.5" width="18" height="18" fill="#c030c8" stroke="#000"/><path d="M3 3L8 8M16 3L11 8M3 16L8 11M16 16L11 11" stroke="#fff" stroke-width="1.2"/><path d="M8 8V5.5M8 8H5.5M11 8V5.5M11 8H13.5M8 11V13.5M8 11H5.5M11 11V13.5M11 11H13.5" stroke="#fff" stroke-width="1"/><circle cx="3" cy="3" r="1" fill="#fff" stroke="#000" stroke-width=".7"/><circle cx="16" cy="3" r="1" fill="#fff" stroke="#000" stroke-width=".7"/><circle cx="3" cy="16" r="1" fill="#fff" stroke="#000" stroke-width=".7"/><circle cx="16" cy="16" r="1" fill="#fff" stroke="#000" stroke-width=".7"/></svg>
<div class="t lt" style="left:874px;top:767px">Cloth Collect</div>
<svg class="a" style="left:990px;top:603px" width="19" height="19"><rect x="0.5" y="0.5" width="18" height="18" fill="#c030c8" stroke="#000"/><path d="M4 14L13 5L15 7L6 16Z" fill="#f0c060" stroke="#000" stroke-width=".9"/><path d="M3 16H16" stroke="#ddd" stroke-width="1"/><circle cx="3" cy="16" r="1.1" fill="#fff" stroke="#000" stroke-width=".7"/><circle cx="16" cy="16" r="1.1" fill="#fff" stroke="#000" stroke-width=".7"/></svg>
<div class="t lt" style="left:1019px;top:607px">Modify Bindings</div>
<svg class="a" style="left:990px;top:623px" width="19" height="19"><rect x="0.5" y="0.5" width="18" height="18" fill="#c030c8" stroke="#000"/><rect x="3.5" y="3.5" width="12" height="12" fill="none" stroke="#e080e0" stroke-dasharray="1 1" stroke-width=".8"/><rect x="6" y="9" width="7" height="6" fill="#aaa" stroke="#000" stroke-width=".8"/><path d="M7.5 9V7A2 2 0 0 1 11.5 7V9" fill="none" stroke="#000" stroke-width="1.2"/><circle cx="3.5" cy="3.5" r="1.2" fill="#fff" stroke="#000" stroke-width=".7"/><circle cx="15.5" cy="3.5" r="1.2" fill="#fff" stroke="#000" stroke-width=".7"/><circle cx="3.5" cy="15.5" r="1.2" fill="#fff" stroke="#000" stroke-width=".7"/><circle cx="15.5" cy="15.5" r="1.2" fill="#fff" stroke="#000" stroke-width=".7"/></svg>
<div class="t lt" style="left:1019px;top:627px">Particle Bind</div>
<svg class="a" style="left:990px;top:643px" width="19" height="19"><rect x="0.5" y="0.5" width="18" height="18" fill="#c030c8" stroke="#000"/><rect x="3.5" y="3.5" width="12" height="12" fill="none" stroke="#f05050" stroke-dasharray="1 1" stroke-width=".8"/><rect x="6" y="9" width="7" height="6" fill="#f08080" stroke="#000" stroke-width=".8"/><path d="M7.5 9V7A2 2 0 0 1 11.5 6" fill="none" stroke="#000" stroke-width="1.2"/><circle cx="3.5" cy="3.5" r="1.2" fill="#fff" stroke="#000" stroke-width=".7"/><circle cx="15.5" cy="3.5" r="1.2" fill="#fff" stroke="#000" stroke-width=".7"/><circle cx="3.5" cy="15.5" r="1.2" fill="#fff" stroke="#000" stroke-width=".7"/><circle cx="15.5" cy="15.5" r="1.2" fill="#fff" stroke="#000" stroke-width=".7"/></svg>
<div class="t lt" style="left:1019px;top:647px">Particle Break</div>
<svg class="a" style="left:990px;top:663px" width="19" height="19"><rect x="0.5" y="0.5" width="18" height="18" fill="#c030c8" stroke="#000"/><circle cx="6" cy="5.5" r="3.8" fill="none" stroke="#fff" stroke-width="1.1"/><circle cx="6" cy="13.5" r="3.8" fill="none" stroke="#fff" stroke-width="1.1"/><circle cx="13.5" cy="9.5" r="3.8" fill="none" stroke="#fff" stroke-width="1.1"/><circle cx="6" cy="5.5" r="1" fill="#fff" stroke="#000" stroke-width=".7"/><circle cx="6" cy="13.5" r="1" fill="#fff" stroke="#000" stroke-width=".7"/><circle cx="13.5" cy="9.5" r="1" fill="#fff" stroke="#000" stroke-width=".7"/></svg>
<div class="t lt" style="left:1019px;top:667px">Particle Physics</div>
<svg class="a" style="left:990px;top:683px" width="19" height="19"><rect x="0.5" y="0.5" width="18" height="18" fill="#c030c8" stroke="#000"/><rect x="3" y="3" width="13" height="5.5" rx="2.7" fill="#e8e8e8" stroke="#000" stroke-width=".9"/><rect x="3" y="10.5" width="13" height="5.5" rx="2.7" fill="#e8e8e8" stroke="#000" stroke-width=".9"/><circle cx="6.5" cy="5.8" r="1.7" fill="#000"/><circle cx="12.5" cy="13.2" r="1.7" fill="#000"/></svg>
<div class="t lt" style="left:1019px;top:687px">Particle Switch</div>
<svg class="a" style="left:990px;top:703px" width="19" height="19"><rect x="0.5" y="0.5" width="18" height="18" fill="#c030c8" stroke="#000"/><path d="M3 12L11 16L16 7L13 5.5" fill="none" stroke="#fff" stroke-width="2.2"/><path d="M4 12L11 15" stroke="#70c8f0" stroke-width="2"/><path d="M7 6A4 4 0 0 1 13 4" fill="none" stroke="#000" stroke-width="1"/></svg>
<div class="t lt" style="left:1019px;top:707px">Wobble</div>
<svg class="a" style="left:990px;top:723px" width="19" height="19"><rect x="0.5" y="0.5" width="18" height="18" fill="#7a48dc" stroke="#000"/><rect x="3.5" y="3.5" width="12" height="12" fill="none" stroke="#b090f0" stroke-dasharray="1 1" stroke-width=".8"/><rect x="6" y="9" width="7" height="6" fill="#aaa" stroke="#000" stroke-width=".8"/><path d="M7.5 9V7A2 2 0 0 1 11.5 7V9" fill="none" stroke="#000" stroke-width="1.2"/><circle cx="3.5" cy="3.5" r="1.2" fill="#fff" stroke="#000" stroke-width=".7"/><circle cx="15.5" cy="3.5" r="1.2" fill="#fff" stroke="#000" stroke-width=".7"/><circle cx="3.5" cy="15.5" r="1.2" fill="#fff" stroke="#000" stroke-width=".7"/><circle cx="15.5" cy="15.5" r="1.2" fill="#fff" stroke="#000" stroke-width=".7"/></svg>
<div class="t lt" style="left:1019px;top:727px">PhysX Bind</div>
<svg class="a" style="left:990px;top:743px" width="19" height="19"><rect x="0.5" y="0.5" width="18" height="18" fill="#7a48dc" stroke="#000"/><rect x="3.5" y="3.5" width="12" height="12" fill="none" stroke="#f05050" stroke-dasharray="1 1" stroke-width=".8"/><rect x="6" y="9" width="7" height="6" fill="#f08080" stroke="#000" stroke-width=".8"/><path d="M7.5 9V7A2 2 0 0 1 11.5 6" fill="none" stroke="#000" stroke-width="1.2"/><circle cx="3.5" cy="3.5" r="1.2" fill="#fff" stroke="#000" stroke-width=".7"/><circle cx="15.5" cy="3.5" r="1.2" fill="#fff" stroke="#000" stroke-width=".7"/><circle cx="3.5" cy="15.5" r="1.2" fill="#fff" stroke="#000" stroke-width=".7"/><circle cx="15.5" cy="15.5" r="1.2" fill="#fff" stroke="#000" stroke-width=".7"/></svg>
<div class="t lt" style="left:1019px;top:747px">PhysX Break</div>
<svg class="a" style="left:990px;top:763px" width="19" height="19"><rect x="0.5" y="0.5" width="18" height="18" fill="#8860e8" stroke="#000"/><path d="M1 16Q9.5 12 18 16V18H1Z" fill="#d8c8f8"/><path d="M3 4L9 10L15 5" fill="none" stroke="#3a9ae8" stroke-width="2.6"/><path d="M2 3H7L3 7Z" fill="#1a5ab8"/><circle cx="15.5" cy="4.5" r="2" fill="#fff" stroke="#000" stroke-width=".8"/></svg>
<div class="t lt" style="left:1019px;top:767px">PhysX Collision</div>
<svg class="a" style="left:1135px;top:603px" width="19" height="19"><rect x="0.5" y="0.5" width="18" height="18" fill="#8860e8" stroke="#000"/><path d="M4 14L13 5L15 7L6 16Z" fill="#f0c060" stroke="#000" stroke-width=".9"/><path d="M3 16H16" stroke="#ddd" stroke-width="1"/><circle cx="3" cy="16" r="1.1" fill="#fff" stroke="#000" stroke-width=".7"/><circle cx="16" cy="16" r="1.1" fill="#fff" stroke="#000" stroke-width=".7"/></svg>
<div class="t lt" style="left:1164px;top:607px">PhysX Modify</div>
<svg class="a" style="left:1135px;top:623px" width="19" height="19"><rect x="0.5" y="0.5" width="18" height="18" fill="#8860e8" stroke="#000"/><path d="M4 7L7 4H16V13L13 16H4Z" fill="#eee" stroke="#000" stroke-width=".9"/><rect x="4" y="7" width="9" height="9" fill="#888" stroke="#000" stroke-width=".9"/></svg>
<div class="t lt" style="left:1164px;top:627px">PhysX Shape</div>
<svg class="a" style="left:1135px;top:643px" width="19" height="19"><rect x="0.5" y="0.5" width="18" height="18" fill="#8860e8" stroke="#000"/><rect x="3" y="3" width="13" height="5.5" rx="2.7" fill="#e8e8e8" stroke="#000" stroke-width=".9"/><rect x="3" y="10.5" width="13" height="5.5" rx="2.7" fill="#e8e8e8" stroke="#000" stroke-width=".9"/><circle cx="6.5" cy="5.8" r="1.7" fill="#000"/><circle cx="12.5" cy="13.2" r="1.7" fill="#000"/></svg>
<div class="t lt" style="left:1164px;top:647px">PhysX Switch</div>
<svg class="a" style="left:1135px;top:663px" width="19" height="19"><rect x="0.5" y="0.5" width="18" height="18" fill="#c8c8f8" stroke="#000"/><circle cx="9.5" cy="3.5" r="1.8" fill="#1a8a8a" stroke="#000" stroke-width=".6"/><rect x="7.5" y="6" width="4" height="5" fill="#2a6ac8" stroke="#000" stroke-width=".6"/><path d="M7.5 7L4.5 11M11.5 7L14.5 11" stroke="#000" stroke-width="1"/><path d="M8.3 11V16M10.7 11V16" stroke="#20a040" stroke-width="1.6"/></svg>
<div class="t lt" style="left:1164px;top:667px">Actor</div>
<svg class="a" style="left:1135px;top:683px" width="19" height="19"><rect x="0.5" y="0.5" width="18" height="18" fill="#c8c8f8" stroke="#000"/><rect x="4" y="2.5" width="11" height="14" fill="#fff" stroke="#000" stroke-width=".9"/><path d="M5.5 2.5V16.5M13.5 2.5V16.5M5.5 9.5H13.5" stroke="#000" stroke-width="1" stroke-dasharray="1.2 1"/><path d="M9.5 4V8M9.5 11V15" stroke="#000" stroke-width="1.2"/></svg>
<div class="t lt" style="left:1164px;top:687px">Actor Animation</div>
<svg class="a" style="left:1135px;top:703px" width="19" height="19"><rect x="0.5" y="0.5" width="18" height="18" fill="#c8c8f8" stroke="#000"/><path d="M9.5 9V16M9.5 9L4 4M9.5 9L15 4" stroke="#000" stroke-width=".9"/><path d="M4 8V15M15 8V15" stroke="#20a040" stroke-width="1.8"/><path d="M3 3L6 5M16 3L13 5" stroke="#2a6ac8" stroke-width="1.6"/><circle cx="9.5" cy="9" r="1.2" fill="#fff" stroke="#000" stroke-width=".7"/></svg>
<div class="t lt" style="left:1164px;top:707px">Actor Center</div>
<svg class="a" style="left:1135px;top:723px" width="19" height="19"><rect x="0.5" y="0.5" width="18" height="18" fill="#c8c8f8" stroke="#000"/><rect x="7.5" y="6" width="4" height="4" fill="#2a6ac8" stroke="#000" stroke-width=".7"/><path d="M9.5 10V16M7 14L9.5 16L12 14" stroke="#000" stroke-width=".9" fill="none"/><path d="M4 8V15M15 8V15" stroke="#20a040" stroke-width="1.8"/><path d="M3 3L6 5M16 3L13 5" stroke="#2a6ac8" stroke-width="1.6"/></svg>
<div class="t lt" style="left:1164px;top:727px">Actor Collect</div>
<svg class="a" style="left:1135px;top:743px" width="19" height="19"><rect x="0.5" y="0.5" width="18" height="18" fill="#c8c8f8" stroke="#000"/><path d="M4 3V16M15 3V16" stroke="#000" stroke-width="1.1"/><rect x="13.5" y="3" width="3" height="13" fill="#fff" stroke="#000" stroke-width=".8"/><path d="M6.5 9.5H12M10 7.5L12 9.5L10 11.5" stroke="#000" stroke-width="1" fill="none"/><circle cx="4" cy="3" r="1.1" fill="#fff" stroke="#000" stroke-width=".7"/><circle cx="4" cy="16" r="1.1" fill="#fff" stroke="#000" stroke-width=".7"/></svg>
<div class="t lt" style="left:1164px;top:747px">Actor Convert</div>
<svg class="a" style="left:1135px;top:763px" width="19" height="19"><rect x="0.5" y="0.5" width="18" height="18" fill="#f08a28" stroke="#000"/><path d="M4 4L15 5L9 15Z" fill="#f0d0a8" stroke="#000" stroke-width="1"/><circle cx="4" cy="4" r="1.2" fill="#fff" stroke="#000" stroke-width=".7"/><circle cx="15" cy="5" r="1.2" fill="#fff" stroke="#000" stroke-width=".7"/><circle cx="9" cy="15" r="1.2" fill="#fff" stroke="#000" stroke-width=".7"/></svg>
<div class="t lt" style="left:1164px;top:767px">Mesh</div>
<svg class="a" style="left:1280px;top:603px" width="19" height="19"><rect x="0.5" y="0.5" width="18" height="18" fill="#f08a28" stroke="#000"/><path d="M15 4H7A3 3 0 0 0 7 10H12A3 3 0 0 1 12 16H4" fill="none" stroke="#fff" stroke-width="1.3" stroke-dasharray="1.2 0.8"/><rect x="14" y="3" width="3" height="3" fill="#000" stroke="#fff" stroke-width=".5"/><rect x="2.5" y="14.5" width="3" height="3" fill="#000" stroke="#fff" stroke-width=".5"/></svg>
<div class="t lt" style="left:1309px;top:607px">Spline Paths</div>
<svg class="a" style="left:1280px;top:623px" width="19" height="19"><rect x="0.5" y="0.5" width="18" height="18" fill="#f8e468" stroke="#000"/><path d="M1 17Q9.5 13 18 17V18H1Z" fill="#a88a20"/><path d="M3 4L9 10L15 5" fill="none" stroke="#3a9ae8" stroke-width="2.6"/><path d="M2 3H7L3 7Z" fill="#1a5ab8"/><circle cx="15.5" cy="4.5" r="2" fill="#fff" stroke="#000" stroke-width=".8"/></svg>
<div class="t lt" style="left:1309px;top:627px">Collision</div>
<svg class="a" style="left:1280px;top:643px" width="19" height="19"><rect x="0.5" y="0.5" width="18" height="18" fill="#f8e468" stroke="#000"/><path d="M4 12L6 4H9V12ZM15 12L13 4H10V12Z" fill="#000"/><circle cx="6.2" cy="13" r="3" fill="#fff" stroke="#000" stroke-width="1.4"/><circle cx="12.8" cy="13" r="3" fill="#fff" stroke="#000" stroke-width="1.4"/><circle cx="6.2" cy="13" r="1" fill="#000"/><circle cx="12.8" cy="13" r="1" fill="#000"/></svg>
<div class="t lt" style="left:1309px;top:647px">Find Target</div>
<svg class="a" style="left:1280px;top:663px" width="19" height="19"><rect x="0.5" y="0.5" width="18" height="18" fill="#f8e468" stroke="#000"/><path d="M6 3.5H15.5V13" fill="none" stroke="#000" stroke-dasharray="1 1" stroke-width="1"/><rect x="14" y="2" width="3" height="3" fill="#000"/><path d="M5 14V5M3.5 6.5L5 4.5L6.5 6.5" stroke="#1030f0" stroke-width="1.3" fill="none"/><path d="M5 14H14M12.5 12.5L14.5 14L12.5 15.5" stroke="#f02020" stroke-width="1.3" fill="none"/><path d="M5 12.5L6.5 14L5 15.5L3.5 14Z" fill="#10c060" stroke="#000" stroke-width=".5"/></svg>
<div class="t lt" style="left:1309px;top:667px">Object Test</div>
<svg class="a" style="left:1280px;top:683px" width="19" height="19"><rect x="0.5" y="0.5" width="18" height="18" fill="#f8e468" stroke="#000"/><rect x="3.5" y="3.5" width="12" height="12" fill="none" stroke="#000" stroke-dasharray="2 1.2" stroke-width="1.1"/><circle cx="9.5" cy="9.5" r="2.2" fill="#fff" stroke="#000" stroke-width="1"/></svg>
<div class="t lt" style="left:1309px;top:687px">Property Test</div>
<svg class="a" style="left:1280px;top:703px" width="19" height="19"><rect x="0.5" y="0.5" width="18" height="18" fill="#f8e468" stroke="#000"/><path d="M3 7H10V3.5L16 9.5L10 15.5V12H3Z" fill="#40a0f0" stroke="#000" stroke-width=".9"/></svg>
<div class="t lt" style="left:1309px;top:707px">Send Out</div>
<svg class="a" style="left:1280px;top:723px" width="19" height="19"><rect x="0.5" y="0.5" width="18" height="18" fill="#f8e468" stroke="#000"/><circle cx="9.5" cy="5" r="2.5" fill="#fff" stroke="#000" stroke-width="1"/><path d="M9.5 7.5V11L4 16M9.5 11L15 16" stroke="#000" stroke-width="1.1" fill="none"/></svg>
<div class="t lt" style="left:1309px;top:727px">Split</div>
<svg class="a" style="left:1280px;top:743px" width="19" height="19"><rect x="0.5" y="0.5" width="18" height="18" fill="#f8e468" stroke="#000"/><path d="M1 18V15Q9.5 8 18 15V18Z" fill="#3a9ae8"/><rect x="4" y="3" width="2" height="2" fill="#fff" stroke="#000" stroke-width=".6"/><path d="M5 6V9" stroke="#000" stroke-width=".8"/><rect x="8.5" y="3" width="2" height="2" fill="#fff" stroke="#000" stroke-width=".6"/><path d="M9.5 6V9" stroke="#000" stroke-width=".8"/><rect x="13" y="3" width="2" height="2" fill="#fff" stroke="#000" stroke-width=".6"/><path d="M14 6V9" stroke="#000" stroke-width=".8"/></svg>
<div class="t lt" style="left:1309px;top:747px">Surface Test</div>
<svg class="a" style="left:1280px;top:763px" width="19" height="19"><rect x="0.5" y="0.5" width="18" height="18" fill="#f8e468" stroke="#000"/><circle cx="9.5" cy="9.5" r="6.5" fill="#fff" stroke="#000" stroke-width="1.3"/><path d="M9.5 5V9.5H13" stroke="#000" stroke-width="1.3" fill="none"/></svg>
<div class="t lt" style="left:1309px;top:767px">Time Test</div>
<svg class="a" style="left:1425px;top:603px" width="19" height="19"><rect x="0.5" y="0.5" width="18" height="18" fill="#1aa0a0" stroke="#000"/><path d="M2 9.5L9 4V15Z" fill="#30c8c8"/><rect x="8" y="7" width="8" height="6" fill="#fff" stroke="#000" stroke-width=".9"/><circle cx="10" cy="5.5" r="1.5" fill="#000"/><circle cx="14" cy="5.5" r="1.5" fill="#000"/></svg>
<div class="t lt" style="left:1454px;top:607px">Camera Cull</div>
<svg class="a" style="left:1425px;top:623px" width="19" height="19"><rect x="0.5" y="0.5" width="18" height="18" fill="#40c4c8" stroke="#000"/><path d="M9.5 0V19M0 9.5H19" stroke="#000" stroke-width="1"/><rect x="10" y="10" width="8.5" height="8.5" fill="#fff" stroke="#000" stroke-width=".8"/><rect x="11.5" y="11.5" width="5.5" height="5.5" fill="#40c4c8"/></svg>
<div class="t lt" style="left:1454px;top:627px">Display</div>
<svg class="a" style="left:1425px;top:643px" width="19" height="19"><rect x="0.5" y="0.5" width="18" height="18" fill="#40c4c8" stroke="#000"/><path d="M3 3V8M5.5 3V8M8 3V8M10.5 3V8M13 3V8M15.5 3V8" stroke="#000" stroke-width="1"/><path d="M4.5 3.5H6.5V7.5H4.5ZM9.5 3.5H11.5V7.5H9.5Z" fill="none" stroke="#000" stroke-width=".8"/><path d="M4 11V16M9 11V16" stroke="#000" stroke-width="1"/><path d="M5.5 11.5H7.5V15.5H5.5ZM10.5 11.5H12.5V15.5H10.5Z" fill="none" stroke="#000" stroke-width=".8"/></svg>
<div class="t lt" style="left:1454px;top:647px">Display Data</div>
<svg class="a" style="left:1425px;top:663px" width="19" height="19"><rect x="0.5" y="0.5" width="18" height="18" fill="#40c4c8" stroke="#000"/><rect x="4.5" y="3" width="10" height="13" fill="#fff" stroke="#000" stroke-width="1"/><path d="M6.5 6H12.5M6.5 8.5H12.5M6.5 11H12.5M6.5 13.5H12.5" stroke="#000" stroke-width=".9"/></svg>
<div class="t lt" style="left:1454px;top:667px">Notes</div>
<svg class="a" style="left:1425px;top:683px" width="19" height="19"><rect x="0.5" y="0.5" width="18" height="18" fill="#3040b0" stroke="#000"/><path d="M8 8H12V5.5L16.5 9.5L12 13.5V11H8Z" fill="#20e020" stroke="#000" stroke-width=".7"/><circle cx="5" cy="4" r="1.3" fill="#fff" stroke="#000" stroke-width=".7"/><circle cx="4" cy="10" r="1.3" fill="#fff" stroke="#000" stroke-width=".7"/><circle cx="6" cy="15" r="1.3" fill="#fff" stroke="#000" stroke-width=".7"/><circle cx="9" cy="7" r="1.3" fill="#fff" stroke="#000" stroke-width=".7"/></svg>
<div class="t lt" style="left:1454px;top:687px">Export Particles</div>
<svg class="a" style="left:1425px;top:703px" width="19" height="19"><rect x="0.5" y="0.5" width="18" height="18" fill="#c880c8" stroke="#000"/><path d="M0.5 9.5H18.5" stroke="#000" stroke-width="1"/><path d="M9.5 3L12.5 6.5H10.5V9H8.5V6.5H6.5Z" fill="#40e040" stroke="#000" stroke-width=".6"/><path d="M9.5 16L12.5 12.5H10.5V10H8.5V12.5H6.5Z" fill="#f04040" stroke="#000" stroke-width=".6"/></svg>
<div class="t lt" style="left:1454px;top:707px">Baseline</div>
<div class="a" style="left:689px;top:785px;width:956px;height:17px;background:#f0f0f0;border-top:1px solid #fff;border-bottom:1px solid #fff"></div>
<div class="a" style="left:1167px;top:786px;width:461px;height:15px;background:#cdcdcd"></div>
<svg class="a" style="left:692px;top:788px" width="10" height="11"><path d="M7 1.5L3 5.5L7 9.5" stroke="#606060" stroke-width="2" fill="none"/></svg>
<svg class="a" style="left:1632px;top:788px" width="10" height="11"><path d="M3 1.5L7 5.5L3 9.5" stroke="#606060" stroke-width="2" fill="none"/></svg>
<div class="a" style="left:936px;top:802px;width:951px;height:7px;background:#303030"></div>
<div class="a" style="left:932px;top:802px;width:4px;height:7px;background:#3a3a3a"></div>
<div class="a" style="left:0;top:809px;width:1887px;height:19px;background:#444"></div>
<div class="a" style="left:0;top:809px;width:117px;height:17px;background:#454545;border-right:2px solid #000;border-bottom:2px solid #000"></div>
<div class="t" style="left:35px;top:812px;font-size:11px;color:#e0e0e0;letter-spacing:-0.2px">10 / 100</div>
<div class="a" style="left:118px;top:809px;width:15px;height:17px;border:1px solid #222;background:#444"></div>
<div class="a" style="left:120px;top:811px;width:11px;height:13px;border:1px dashed #111"></div>
<svg class="a" style="left:121px;top:813px" width="10" height="9"><path d="M2 1L8 4.5L2 8" stroke="#ddd" stroke-width="1" fill="none"/></svg>
<div class="a" style="left:0;top:828px;width:1887px;height:1px;background:#111"></div>
<div class="a" style="left:0;top:829px;width:1887px;height:24px;background:#2a2a2a"></div>
<div class="a" style="left:0;top:853px;width:1887px;height:5px;background:#3a3a3a"></div>
<div class="a" style="left:4px;top:829px;width:1px;height:11px;background:#7a7a7a"></div>
<div class="a" style="left:26px;top:829px;width:1px;height:11px;background:#7a7a7a"></div>
<div class="a" style="left:48px;top:829px;width:1px;height:25px;background:#7a7a7a"></div>
<div class="a" style="left:70px;top:829px;width:1px;height:11px;background:#7a7a7a"></div>
<div class="a" style="left:92px;top:829px;width:1px;height:11px;background:#7a7a7a"></div>
<div class="a" style="left:114px;top:829px;width:1px;height:11px;background:#7a7a7a"></div>
<div class="a" style="left:137px;top:829px;width:1px;height:11px;background:#7a7a7a"></div>
<div class="a" style="left:159px;top:829px;width:1px;height:25px;background:#7a7a7a"></div>
<div class="a" style="left:181px;top:829px;width:1px;height:11px;background:#7a7a7a"></div>
<div class="a" style="left:203px;top:829px;width:1px;height:11px;background:#7a7a7a"></div>
<div class="a" style="left:225px;top:829px;width:1px;height:11px;background:#7a7a7a"></div>
<div class="a" style="left:247px;top:829px;width:1px;height:11px;background:#7a7a7a"></div>
<div class="a" style="left:269px;top:829px;width:1px;height:25px;background:#7a7a7a"></div>
<div class="a" style="left:292px;top:829px;width:1px;height:11px;background:#7a7a7a"></div>
<div class="a" style="left:314px;top:829px;width:1px;height:11px;background:#7a7a7a"></div>
<div class="a" style="left:336px;top:829px;width:1px;height:11px;background:#7a7a7a"></div>
<div class="a" style="left:358px;top:829px;width:1px;height:11px;background:#7a7a7a"></div>
<div class="a" style="left:380px;top:829px;width:1px;height:25px;background:#7a7a7a"></div>
<div class="a" style="left:402px;top:829px;width:1px;height:11px;background:#7a7a7a"></div>
<div class="a" style="left:424px;top:829px;width:1px;height:11px;background:#7a7a7a"></div>
<div class="a" style="left:447px;top:829px;width:1px;height:11px;background:#7a7a7a"></div>
<div class="a" style="left:469px;top:829px;width:1px;height:11px;background:#7a7a7a"></div>
<div class="a" style="left:491px;top:829px;width:1px;height:25px;background:#7a7a7a"></div>
<div class="a" style="left:513px;top:829px;width:1px;height:11px;background:#7a7a7a"></div>
<div class="a" style="left:535px;top:829px;width:1px;height:11px;background:#7a7a7a"></div>
<div class="a" style="left:557px;top:829px;width:1px;height:11px;background:#7a7a7a"></div>
<div class="a" style="left:579px;top:829px;width:1px;height:11px;background:#7a7a7a"></div>
<div class="a" style="left:602px;top:829px;width:1px;height:25px;background:#7a7a7a"></div>
<div class="a" style="left:624px;top:829px;width:1px;height:11px;background:#7a7a7a"></div>
<div class="a" style="left:646px;top:829px;width:1px;height:11px;background:#7a7a7a"></div>
<div class="a" style="left:668px;top:829px;width:1px;height:11px;background:#7a7a7a"></div>
<div class="a" style="left:690px;top:829px;width:1px;height:11px;background:#7a7a7a"></div>
<div class="a" style="left:712px;top:829px;width:1px;height:25px;background:#7a7a7a"></div>
<div class="a" style="left:735px;top:829px;width:1px;height:11px;background:#7a7a7a"></div>
<div class="a" style="left:757px;top:829px;width:1px;height:11px;background:#7a7a7a"></div>
<div class="a" style="left:779px;top:829px;width:1px;height:11px;background:#7a7a7a"></div>
<div class="a" style="left:801px;top:829px;width:1px;height:11px;background:#7a7a7a"></div>
<div class="a" style="left:823px;top:829px;width:1px;height:25px;background:#7a7a7a"></div>
<div class="a" style="left:845px;top:829px;width:1px;height:11px;background:#7a7a7a"></div>
<div class="a" style="left:867px;top:829px;width:1px;height:11px;background:#7a7a7a"></div>
<div class="a" style="left:890px;top:829px;width:1px;height:11px;background:#7a7a7a"></div>
<div class="a" style="left:912px;top:829px;width:1px;height:11px;background:#7a7a7a"></div>
<div class="a" style="left:934px;top:829px;width:1px;height:25px;background:#7a7a7a"></div>
<div class="a" style="left:956px;top:829px;width:1px;height:11px;background:#7a7a7a"></div>
<div class="a" style="left:978px;top:829px;width:1px;height:11px;background:#7a7a7a"></div>
<div class="a" style="left:1000px;top:829px;width:1px;height:11px;background:#7a7a7a"></div>
<div class="a" style="left:1022px;top:829px;width:1px;height:11px;background:#7a7a7a"></div>
<div class="a" style="left:1045px;top:829px;width:1px;height:25px;background:#7a7a7a"></div>
<div class="a" style="left:1067px;top:829px;width:1px;height:11px;background:#7a7a7a"></div>
<div class="a" style="left:1089px;top:829px;width:1px;height:11px;background:#7a7a7a"></div>
<div class="a" style="left:1111px;top:829px;width:1px;height:11px;background:#7a7a7a"></div>
<div class="a" style="left:1133px;top:829px;width:1px;height:11px;background:#7a7a7a"></div>
<div class="a" style="left:1155px;top:829px;width:1px;height:25px;background:#7a7a7a"></div>
<div class="a" style="left:1178px;top:829px;width:1px;height:11px;background:#7a7a7a"></div>
<div class="a" style="left:1200px;top:829px;width:1px;height:11px;background:#7a7a7a"></div>
<div class="a" style="left:1222px;top:829px;width:1px;height:11px;background:#7a7a7a"></div>
<div class="a" style="left:1244px;top:829px;width:1px;height:11px;background:#7a7a7a"></div>
<div class="a" style="left:1266px;top:829px;width:1px;height:25px;background:#7a7a7a"></div>
<div class="a" style="left:1288px;top:829px;width:1px;height:11px;background:#7a7a7a"></div>
<div class="a" style="left:1310px;top:829px;width:1px;height:11px;background:#7a7a7a"></div>
<div class="a" style="left:1333px;top:829px;width:1px;height:11px;background:#7a7a7a"></div>
<div class="a" style="left:1355px;top:829px;width:1px;height:11px;background:#7a7a7a"></div>
<div class="a" style="left:1377px;top:829px;width:1px;height:25px;background:#7a7a7a"></div>
<div class="a" style="left:1399px;top:829px;width:1px;height:11px;background:#7a7a7a"></div>
<div class="a" style="left:1421px;top:829px;width:1px;height:11px;background:#7a7a7a"></div>
<div class="a" style="left:1443px;top:829px;width:1px;height:11px;background:#7a7a7a"></div>
<div class="a" style="left:1466px;top:829px;width:1px;height:11px;background:#7a7a7a"></div>
<div class="a" style="left:1488px;top:829px;width:1px;height:25px;background:#7a7a7a"></div>
<div class="a" style="left:1510px;top:829px;width:1px;height:11px;background:#7a7a7a"></div>
<div class="a" style="left:1532px;top:829px;width:1px;height:11px;background:#7a7a7a"></div>
<div class="a" style="left:1554px;top:829px;width:1px;height:11px;background:#7a7a7a"></div>
<div class="a" style="left:1576px;top:829px;width:1px;height:11px;background:#7a7a7a"></div>
<div class="a" style="left:1598px;top:829px;width:1px;height:25px;background:#7a7a7a"></div>
<div class="a" style="left:1621px;top:829px;width:1px;height:11px;background:#7a7a7a"></div>
<div class="a" style="left:1643px;top:829px;width:1px;height:11px;background:#7a7a7a"></div>
<div class="a" style="left:1665px;top:829px;width:1px;height:11px;background:#7a7a7a"></div>
<div class="a" style="left:1687px;top:829px;width:1px;height:11px;background:#7a7a7a"></div>
<div class="a" style="left:1709px;top:829px;width:1px;height:25px;background:#7a7a7a"></div>
<div class="a" style="left:1731px;top:829px;width:1px;height:11px;background:#7a7a7a"></div>
<div class="a" style="left:1753px;top:829px;width:1px;height:11px;background:#7a7a7a"></div>
<div class="a" style="left:1776px;top:829px;width:1px;height:11px;background:#7a7a7a"></div>
<div class="a" style="left:1798px;top:829px;width:1px;height:11px;background:#7a7a7a"></div>
<div class="a" style="left:1820px;top:829px;width:1px;height:25px;background:#7a7a7a"></div>
<div class="a" style="left:1842px;top:829px;width:1px;height:11px;background:#7a7a7a"></div>
<div class="a" style="left:1864px;top:829px;width:1px;height:11px;background:#7a7a7a"></div>
<div class="a" style="left:1886px;top:829px;width:1px;height:11px;background:#7a7a7a"></div>
<div class="a" style="left:44px;top:829px;width:9px;height:25px;background:#a09420;border:1px solid #1a1a1a"></div>
<div class="a" style="left:48px;top:828px;width:1px;height:26px;background:#c8c080"></div>
<div class="t" style="left:33px;top:842px;width:31px;text-align:center;font-size:11px;color:#e6e6e6">10</div>
<div class="t" style="left:144px;top:842px;width:31px;text-align:center;font-size:11px;color:#e6e6e6">15</div>
<div class="t" style="left:254px;top:842px;width:31px;text-align:center;font-size:11px;color:#e6e6e6">20</div>
<div class="t" style="left:365px;top:842px;width:31px;text-align:center;font-size:11px;color:#e6e6e6">25</div>
<div class="t" style="left:476px;top:842px;width:31px;text-align:center;font-size:11px;color:#e6e6e6">30</div>
<div class="t" style="left:587px;top:842px;width:31px;text-align:center;font-size:11px;color:#e6e6e6">35</div>
<div class="t" style="left:697px;top:842px;width:31px;text-align:center;font-size:11px;color:#e6e6e6">40</div>
<div class="t" style="left:808px;top:842px;width:31px;text-align:center;font-size:11px;color:#e6e6e6">45</div>
<div class="t" style="left:919px;top:842px;width:31px;text-align:center;font-size:11px;color:#e6e6e6">50</div>
<div class="t" style="left:1030px;top:842px;width:31px;text-align:center;font-size:11px;color:#e6e6e6">55</div>
<div class="t" style="left:1140px;top:842px;width:31px;text-align:center;font-size:11px;color:#e6e6e6">60</div>
<div class="t" style="left:1251px;top:842px;width:31px;text-align:center;font-size:11px;color:#e6e6e6">65</div>
<div class="t" style="left:1362px;top:842px;width:31px;text-align:center;font-size:11px;color:#e6e6e6">70</div>
<div class="t" style="left:1473px;top:842px;width:31px;text-align:center;font-size:11px;color:#e6e6e6">75</div>
<div class="t" style="left:1583px;top:842px;width:31px;text-align:center;font-size:11px;color:#e6e6e6">80</div>
<div class="t" style="left:1694px;top:842px;width:31px;text-align:center;font-size:11px;color:#e6e6e6">85</div>
<div class="t" style="left:1805px;top:842px;width:31px;text-align:center;font-size:11px;color:#e6e6e6">90</div>
<div class="a" style="left:0;top:858px;width:1887px;height:21px;background:#444"></div>
<div class="a" style="left:0;top:858px;width:1413px;height:1px;background:#080808"></div>
<div class="a" style="left:1413px;top:858px;width:1px;height:21px;background:#3a3a3a"></div>
<svg class="a" style="left:1421px;top:860px" width="11" height="16"><circle cx="5.5" cy="5" r="4.2" fill="#e07878" stroke="#a04848" stroke-width=".8"/><circle cx="4.3" cy="3.8" r="1.5" fill="#f8c8c8"/><path d="M5.5 9V15" stroke="#ddd" stroke-width="1.6"/></svg>
<svg class="a" style="left:1447px;top:861px" width="12" height="14"><path d="M3 6V4A3 3 0 0 1 9 4V6" stroke="#f0d8a0" stroke-width="1.6" fill="none"/><rect x="1" y="6" width="10" height="7" fill="#f0d8a0"/><rect x="5.3" y="8" width="1.4" height="3.5" fill="#555"/></svg>
<svg class="a" style="left:1473px;top:861px" width="15" height="14"><rect x="0" y="0" width="15" height="14" fill="#e8e8e8"/><path d="M7.5 0V14M0 7H15" stroke="#666" stroke-width="1"/><circle cx="7.5" cy="7" r="3" fill="#e8e8e8" stroke="#555" stroke-width="1"/></svg>
<div class="t" style="left:1496px;top:863px;font-size:12px;color:#e0e0e0">X:</div>
<div class="a" style="left:1507px;top:858px;width:57px;height:21px;background:#505050;border-top:2px solid #000;border-left:2px solid #000"></div>
<div class="t" style="left:1510px;top:863px;font-size:12px;color:#000;letter-spacing:-0.3px;-webkit-text-stroke:0.25px #000">47.745cm</div>
<div class="t" style="left:1577px;top:863px;font-size:12px;color:#e0e0e0">Y:</div>
<div class="a" style="left:1588px;top:858px;width:58px;height:21px;background:#505050;border-top:2px solid #000;border-left:2px solid #000"></div>
<div class="t" style="left:1591px;top:863px;font-size:12px;color:#000;letter-spacing:-0.3px;-webkit-text-stroke:0.25px #000">-31.683cm</div>
<div class="t" style="left:1660px;top:863px;font-size:12px;color:#e0e0e0">Z:</div>
<div class="a" style="left:1671px;top:858px;width:57px;height:21px;background:#505050;border-top:2px solid #000;border-left:2px solid #000"></div>
<div class="t" style="left:1674px;top:863px;font-size:12px;color:#000;letter-spacing:-0.3px;-webkit-text-stroke:0.25px #000">0.0cm</div>
<div class="a" style="left:1743px;top:858px;width:99px;height:21px;background:#474747;border-top:1px solid #111;border-left:1px solid #333;border-right:1px solid #3a3a3a"></div>
<div class="t" style="left:1750px;top:863px;font-size:12px;color:#e0e0e0">Grid = 10.0cm</div>
<div class="a" style="left:1846px;top:858px;width:41px;height:21px;background:#444;border:1px solid #3a3a3a;border-right:none"></div>
<svg class="a" style="left:1855px;top:870px" width="32" height="9"><circle cx="7" cy="7" r="4" fill="none" stroke="#000" stroke-width="2"/><path d="M11 6H32" stroke="#000" stroke-width="3"/></svg>
</body></html>
